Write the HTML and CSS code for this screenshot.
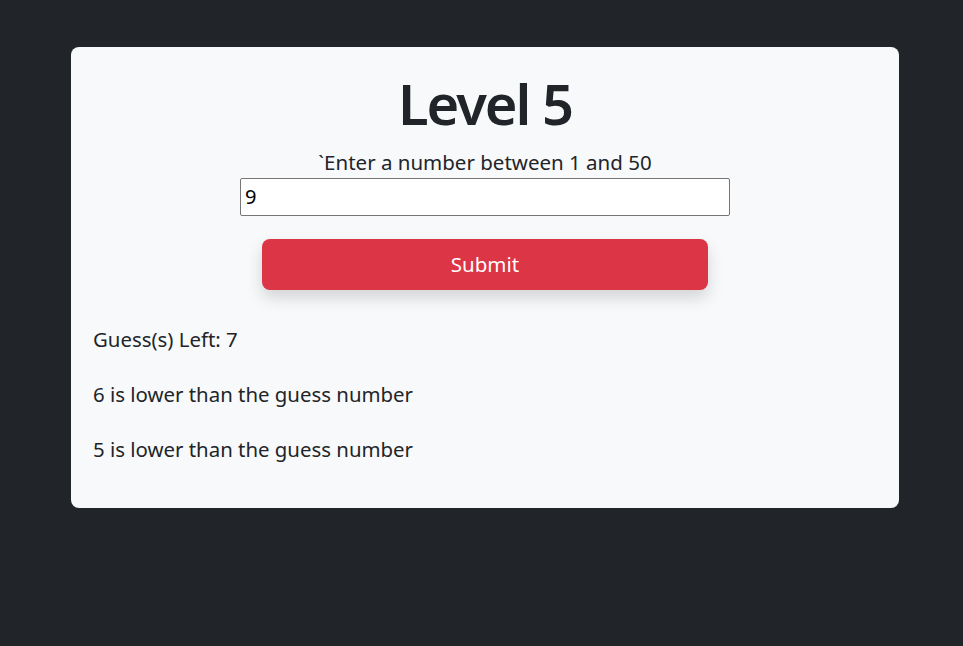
FILE: index.html
```html
<!DOCTYPE html>
<html lang="en">
<head>
<meta charset="utf-8">
<title>Guess the number</title>
<link rel="stylesheet" href="styles.css">
</head>
<body>
<main class="page">
  <section class="card">
    <h1 class="title">Level 5</h1>
    <label class="prompt" for="guess">`Enter a number between 1 and 50</label>
    <input class="guess-input" id="guess" type="text" value="9">
    <button class="submit-btn" type="button">Submit</button>
    <div class="log">
      <p class="log-line">Guess(s) Left: 7</p>
      <p class="log-line">6 is lower than the guess number</p>
      <p class="log-line">5 is lower than the guess number</p>
    </div>
  </section>
</main>
</body>
</html>
```

FILE: styles.css
```css
* { box-sizing: border-box; }
html, body {
  margin: 0;
  padding: 0;
  background: #212529;
  color: #212529;
  font-family: "Noto Sans", "Open Sans", sans-serif;
}
.page {
  padding: 47px 64px 0 71px;
}
.card {
  width: 828px;
  background: #f8f9fa;
  border-radius: 8px;
  padding: 23px 22px 44px;
  display: flex;
  flex-direction: column;
  align-items: center;
}
.title {
  margin: 0;
  font-size: 56px;
  font-weight: 600;
  letter-spacing: -2px;
  line-height: 1.2;
}
.prompt {
  margin-top: 13px;
  font-size: 20.5px;
  line-height: 1.2;
}
.guess-input {
  width: 490px;
  height: 38px;
  margin: 3px 0 0;
  border: 1px solid #767676;
  border-radius: 2px;
  padding: 0 4px;
  font: inherit;
  font-size: 20px;
  color: #000;
  background: #fff;
}
.submit-btn {
  margin-top: 23px;
  width: 446px;
  height: 51px;
  border: none;
  border-radius: 8px;
  background: #dc3545;
  color: #fff;
  font: inherit;
  font-size: 20.5px;
  box-shadow: 0 8px 16px rgba(0, 0, 0, 0.15);
}
.log {
  align-self: stretch;
  margin-top: 34px;
}
.log-line {
  margin: 0 0 25px;
  font-size: 20.4px;
  line-height: 30px;
}
.log-line:last-child { margin-bottom: 0; }
```
